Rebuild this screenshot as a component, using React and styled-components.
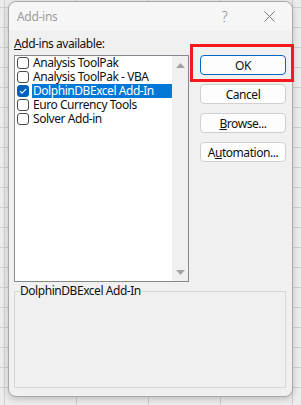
import React from 'react';
import styled, { createGlobalStyle } from 'styled-components';

const Global = createGlobalStyle`
  html, body { margin: 0; padding: 0; }
  body {
    width: 301px;
    height: 405px;
    overflow: hidden;
    font-family: "Noto Sans", "Segoe UI", sans-serif;
    letter-spacing: -0.45px;
    background-color: #ececec;
    background-image:
      linear-gradient(to right, #d0d0d0 1px, transparent 1px),
      linear-gradient(to bottom, #d0d0d0 1px, transparent 1px);
    background-size: 72px 20px;
    background-position: 4px 7px;
  }
`;

const Page = styled.div`
  padding: 1px 0 0 8px;
`;

const Dialog = styled.div`
  width: 285px;
  height: 396px;
  box-sizing: border-box;
  background: #f0f0f0;
  border: 1px solid #a9a9a9;
  border-radius: 8px;
  box-shadow: 0 2px 6px rgba(0, 0, 0, 0.2);
  display: flex;
  flex-direction: column;
`;

const TitleBar = styled.div`
  height: 28px;
  display: flex;
  align-items: center;
  padding-left: 8px;
  background: #f6f6f6;
  border-radius: 8px 8px 0 0;
`;

const Title = styled.span`
  font-size: 12px;
  letter-spacing: -0.3px;
  color: #9c9c9c;
  flex: 1;
`;

const TitleButton = styled.div`
  width: 45px;
  height: 28px;
  display: flex;
  align-items: center;
  justify-content: center;
  color: #8a8a8a;
  font-size: 14px;
  font-weight: 300;
`;

const Body = styled.div`
  padding: 7px 6px 0 5px;
  display: flex;
  flex-direction: column;
`;

const Main = styled.div`
  display: grid;
  grid-template-columns: 175px 86px;
  column-gap: 11px;
`;

const LeftCol = styled.div`
  display: flex;
  flex-direction: column;
`;

const Label = styled.div`
  font-size: 12px;
  line-height: 14px;
  height: 14px;
  color: #111;
  margin-bottom: 4px;
`;

const ListBox = styled.div`
  height: 227px;
  box-sizing: border-box;
  border: 1px solid #85888f;
  background: #fff;
  display: flex;
`;

const Items = styled.div`
  flex: 1;
  display: flex;
  flex-direction: column;
`;

const Item = styled.div`
  height: 14px;
  display: flex;
  align-items: center;
  padding-left: 2px;
`;

const Box = styled.span`
  width: 12px;
  height: 12px;
  box-sizing: border-box;
  border-radius: 3px;
  border: 1px solid ${p => (p.$checked ? '#005fb8' : '#4a4a4a')};
  background: ${p => (p.$checked ? '#005fb8' : '#fff')};
  display: flex;
  align-items: center;
  justify-content: center;
  margin-right: 3px;
  flex-shrink: 0;
`;

const ItemText = styled.span`
  flex: 1;
  height: 14px;
  line-height: 14px;
  font-size: 12px;
  padding-left: 1px;
  white-space: nowrap;
  color: ${p => (p.$selected ? '#fff' : '#111')};
  background: ${p => (p.$selected ? '#0078d7' : 'transparent')};
`;

const ScrollBar = styled.div`
  width: 16px;
  background: #f0f0f0;
  display: flex;
  flex-direction: column;
  justify-content: space-between;
  align-items: center;
  padding: 7px 0 6px;
`;

const RightCol = styled.div`
  display: flex;
  flex-direction: column;
  gap: 9px;
  padding-top: 18px;
`;

const Button = styled.div`
  height: 20px;
  box-sizing: border-box;
  border: 1px solid ${p => (p.$primary ? '#0067c0' : '#d0d0d0')};
  border-radius: 4px;
  background: #fdfdfd;
  display: flex;
  align-items: center;
  justify-content: center;
  font-size: 12px;
  color: #111;
`;

const OkWrap = styled.div`
  position: relative;
  &::after {
    content: '';
    position: absolute;
    top: -11px;
    left: -10px;
    right: -8px;
    bottom: -7px;
    border: 3px solid #f5191b;
    pointer-events: none;
  }
`;

const Group = styled.fieldset`
  margin: 2px 0 0 0;
  padding: 0 0 0 5px;
  width: 272px;
  height: 104px;
  box-sizing: border-box;
  border: 1px solid #d7d7d7;
  min-width: 0;
`;

const Legend = styled.legend`
  font-size: 12px;
  line-height: 14px;
  color: #111;
  padding: 0;
`;

const Arrow = ({ up }) => (
  <svg width="9" height="5" viewBox="0 0 9 5">
    <polygon points={up ? '4.5,0 9,5 0,5' : '0,0 9,0 4.5,5'} fill="#a3a3a3" />
  </svg>
);

const Check = () => (
  <svg width="10" height="10" viewBox="0 0 10 10">
    <polyline points="2,5.2 4,7.2 8.2,2.8" fill="none" stroke="#fff" strokeWidth="1.1" />
  </svg>
);

const items = [
  { name: 'Analysis ToolPak' },
  { name: 'Analysis ToolPak - VBA' },
  { name: 'DolphinDBExcel Add-In', checked: true, selected: true },
  { name: 'Euro Currency Tools' },
  { name: 'Solver Add-in' },
];

export default function App() {
  return (
    <>
      <Global />
      <Page>
        <Dialog>
          <TitleBar>
            <Title>Add-ins</Title>
            <TitleButton>?</TitleButton>
            <TitleButton>
              <svg width="11" height="11" viewBox="0 0 11 11">
                <path d="M0.5 0.5 L10.5 10.5 M10.5 0.5 L0.5 10.5" stroke="#7a7a7a" strokeWidth="1" />
              </svg>
            </TitleButton>
          </TitleBar>
          <Body>
            <Main>
              <LeftCol>
                <Label><u>A</u>dd-ins available:</Label>
                <ListBox>
                  <Items>
                    {items.map(it => (
                      <Item key={it.name}>
                        <Box $checked={it.checked}>{it.checked && <Check />}</Box>
                        <ItemText $selected={it.selected}>{it.name}</ItemText>
                      </Item>
                    ))}
                  </Items>
                  <ScrollBar>
                    <Arrow up />
                    <Arrow />
                  </ScrollBar>
                </ListBox>
              </LeftCol>
              <RightCol>
                <OkWrap>
                  <Button $primary>OK</Button>
                </OkWrap>
                <Button>Cancel</Button>
                <Button><u>B</u>rowse...</Button>
                <Button>A<u>u</u>tomation...</Button>
              </RightCol>
            </Main>
            <Group>
              <Legend>DolphinDBExcel Add-In</Legend>
            </Group>
          </Body>
        </Dialog>
      </Page>
    </>
  );
}
